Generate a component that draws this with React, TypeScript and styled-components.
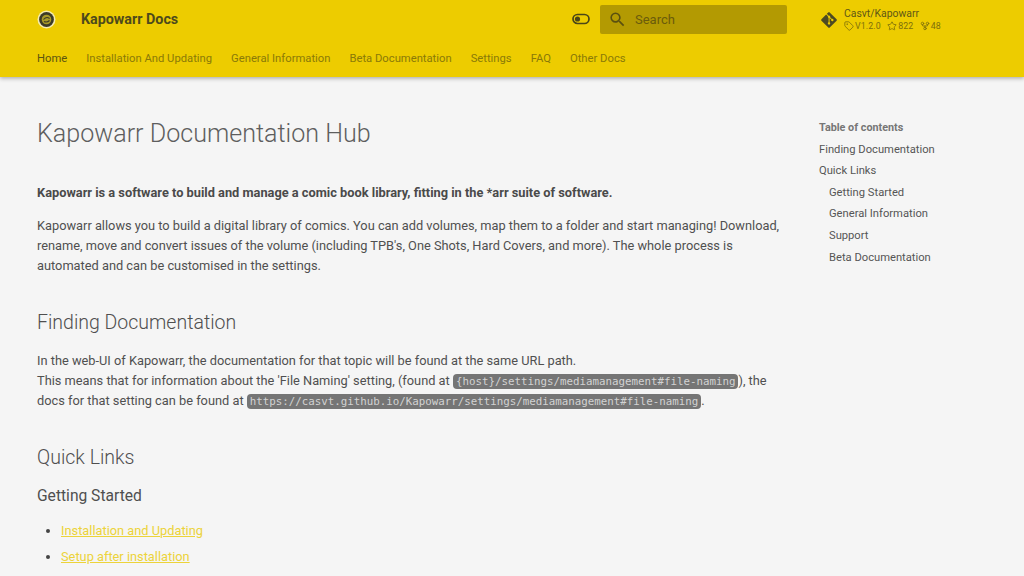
import React from "react";
import styled, { createGlobalStyle } from "styled-components";
import { Tag, Star, GitFork } from "lucide-react";
import { FaGitAlt } from "react-icons/fa";

const Global = createGlobalStyle`
  html, body { margin: 0; padding: 0; height: 100%; overflow: hidden; background: #f5f5f5; }
  body { font-family: Roboto, "Liberation Sans", sans-serif; color: #555; }
  * { box-sizing: border-box; }
`;

const Page = styled.div`
  width: 1024px;
  height: 576px;
  overflow: hidden;
  background: #f5f5f5;
`;
const Header = styled.header`
  height: 77px;
  background: #edcc00;
  box-shadow: 0 0 3px rgba(0,0,0,.12), 0 2px 4px rgba(0,0,0,.22);
  position: relative;
  z-index: 1;
`;
const TopRow = styled.div`
  height: 39px;
  display: flex;
  align-items: center;
  padding-left: 37px;
`;
const Logo = styled.svg`
  width: 19px;
  height: 19px;
  flex: none;
`;
const Title = styled.div`
  margin-left: 25px;
  width: 491px;
  font-size: 14.3px;
  font-weight: 700;
  color: #4d4a1c;
  line-height: 20px;
  margin-top: -1px;
`;
const Toggle = styled.svg`
  width: 18px;
  height: 12px;
  flex: none;
  margin-top: -1px;
`;
const SearchBox = styled.div`
  margin-left: 10px;
  width: 187px;
  height: 29px;
  background: #b39a02;
  border-radius: 2px;
  display: flex;
  align-items: center;
  padding-left: 8px;
  gap: 8px;
  color: #6b5c0c;
  font-size: 13px;
  margin-top: -1px;
`;
const SearchIcon = styled.svg`
  width: 19px;
  height: 19px;
  flex: none;
  fill: #5a5010;
`;
const Repo = styled.div`
  margin-left: 33px;
  display: flex;
  align-items: center;
`;
const RepoLogo = styled(FaGitAlt)`
  width: 18px;
  height: 18px;
  flex: none;
  margin-right: 6px;
  color: #4d4a22;
`;
const RepoText = styled.div`
  display: flex;
  flex-direction: column;
  margin-top: 1px;
`;
const RepoName = styled.div`
  font-size: 10.4px;
  line-height: 12px;
  color: #5f5716;
`;
const Facts = styled.div`
  display: flex;
  gap: 6.5px;
  font-size: 8.8px;
  line-height: 12px;
  color: #7d6f0c;
`;
const Fact = styled.span`
  display: inline-flex;
  align-items: center;
  gap: 1px;
  letter-spacing: .1px;
`;
const Tabs = styled.nav`
  display: flex;
  gap: 19px;
  padding-left: 37px;
  height: 39px;
  align-items: center;
`;
const TabLink = styled.a<{ $active?: boolean }>`
  font-size: 11.24px;
  color: ${p => (p.$active ? "#5c5510" : "#8a7a08")};
  line-height: 16px;
`;
const Body = styled.div`
  display: grid;
  grid-template-columns: 782px 1fr;
  padding-left: 37px;
`;
const Main = styled.main`
  width: 745px;
  padding-top: 42px;
`;
const H1 = styled.h1`
  margin: 0;
  font-size: 25.1px;
  line-height: 30px;
  font-weight: 300;
  color: #5e5e5e;
`;
const Lead = styled.p`
  margin: 34px 0 0;
  font-size: 12.8px;
  line-height: 20.5px;
  font-weight: 700;
  color: #4a4a4a;
`;
const Para = styled.p<{ $gap: number }>`
  margin: ${p => p.$gap}px 0 0;
  font-size: 12.8px;
  line-height: 20.3px;
  color: #505050;
`;
const H2 = styled.h2<{ $gap: number }>`
  margin: ${p => p.$gap}px 0 0;
  font-size: 19.5px;
  line-height: 26px;
  font-weight: 300;
  color: #4f4f4f;
`;
const H3 = styled.h3`
  margin: 13px 0 0;
  font-size: 15.6px;
  line-height: 24px;
  font-weight: 400;
  color: #4f4f4f;
`;
const Code = styled.code`
  font-family: "DejaVu Sans Mono", "Liberation Mono", monospace;
  font-size: 10.8px;
  line-height: 1;
  background: #757575;
  color: #d2d2d2;
  padding: 1px 3px;
  border-radius: 4px;
`;
const List = styled.ul`
  margin: 13px 0 0;
  padding: 0 0 0 24px;
`;
const Item = styled.li`
  font-size: 12.8px;
  line-height: 20.5px;
  margin-bottom: 5.5px;
  color: #444;
`;
const Link = styled.a`
  color: #ecd33a;
  text-decoration: underline;
  text-underline-offset: 1px;
`;
const Toc = styled.aside`
  padding-top: 43px;
`;
const TocTitle = styled.div`
  font-size: 10.8px;
  font-weight: 700;
  color: #767676;
  line-height: 16px;
  margin-bottom: 5.6px;
`;
const TocItem = styled.div<{ $indent?: boolean }>`
  font-size: 11.2px;
  line-height: 16px;
  margin-bottom: 5.6px;
  color: #565656;
  padding-left: ${p => (p.$indent ? "10px" : "0")};
`;

const tabs = ["Home", "Installation And Updating", "General Information", "Beta Documentation", "Settings", "FAQ", "Other Docs"];
const toc: [string, boolean][] = [
  ["Finding Documentation", false],
  ["Quick Links", false],
  ["Getting Started", true],
  ["General Information", true],
  ["Support", true],
  ["Beta Documentation", true],
];

export default function App() {
  return (
    <Page>
      <Global />
      <Header>
        <TopRow>
          <Logo viewBox="0 0 19 19">
            <circle cx="9.5" cy="9.5" r="9" fill="#f5ecb0" />
            <circle cx="9.5" cy="9.5" r="7.4" fill="#3b3a26" />
            <circle cx="9.5" cy="9.5" r="4.8" fill="#a89a28" />
            <path d="M6.5 9.5 Q9.5 6 12.6 8.5 M7 11.5 Q10 13 12.5 10.5" stroke="#3b3a26" strokeWidth="1.1" fill="none" />
          </Logo>
          <Title>Kapowarr Docs</Title>
          <Toggle viewBox="0 0 18 12">
            <rect x="1" y="1.5" width="16" height="9" rx="4.5" fill="none" stroke="#4a4618" strokeWidth="1.7" />
            <circle cx="5.5" cy="6" r="2.6" fill="#4a4618" />
          </Toggle>
          <SearchBox>
            <SearchIcon viewBox="0 0 24 24">
              <path d="M9.5,3A6.5,6.5 0 0,1 16,9.5C16,11.11 15.41,12.59 14.44,13.73L14.71,14H15.5L20.5,19L19,20.5L14,15.5V14.71L13.73,14.44C12.59,15.41 11.11,16 9.5,16A6.5,6.5 0 0,1 3,9.5A6.5,6.5 0 0,1 9.5,3M9.5,5C7,5 5,7 5,9.5C5,12 7,14 9.5,14C12,14 14,12 14,9.5C14,7 12,5 9.5,5Z" />
            </SearchIcon>
            <span>Search</span>
          </SearchBox>
          <Repo>
            <RepoLogo />
            <RepoText>
              <RepoName>Casvt/Kapowarr</RepoName>
              <Facts>
                <Fact><Tag size={10} />V1.2.0</Fact>
                <Fact><Star size={10} />822</Fact>
                <Fact><GitFork size={10} />48</Fact>
              </Facts>
            </RepoText>
          </Repo>
        </TopRow>
        <Tabs>
          {tabs.map((t, i) => (
            <TabLink key={t} $active={i === 0}>{t}</TabLink>
          ))}
        </Tabs>
      </Header>
      <Body>
        <Main>
          <H1>Kapowarr Documentation Hub</H1>
          <Lead>Kapowarr is a software to build and manage a comic book library, fitting in the *arr suite of software.</Lead>
          <Para $gap={12}>
            Kapowarr allows you to build a digital library of comics. You can add volumes, map them to a folder and start managing! Download, rename, move and convert issues of the volume (including TPB's, One Shots, Hard Covers, and more). The whole process is automated and can be customised in the settings.
          </Para>
          <H2 $gap={33.5}>Finding Documentation</H2>
          <Para $gap={15}>
            In the web-UI of Kapowarr, the documentation for that topic will be found at the same URL path.<br />
            This means that for information about the 'File Naming' setting, (found at <Code>{"{host}/settings/mediamanagement#file-naming"}</Code>), the docs for that setting can be found at <Code>https://casvt.github.io/Kapowarr/settings/mediamanagement#file-naming</Code>.
          </Para>
          <H2 $gap={33}>Quick Links</H2>
          <H3>Getting Started</H3>
          <List>
            <Item><Link>Installation and Updating</Link></Item>
            <Item><Link>Setup after installation</Link></Item>
          </List>
        </Main>
        <Toc>
          <TocTitle>Table of contents</TocTitle>
          {toc.map(([t, indent]) => (
            <TocItem key={t} $indent={indent}>{t}</TocItem>
          ))}
        </Toc>
      </Body>
    </Page>
  );
}
